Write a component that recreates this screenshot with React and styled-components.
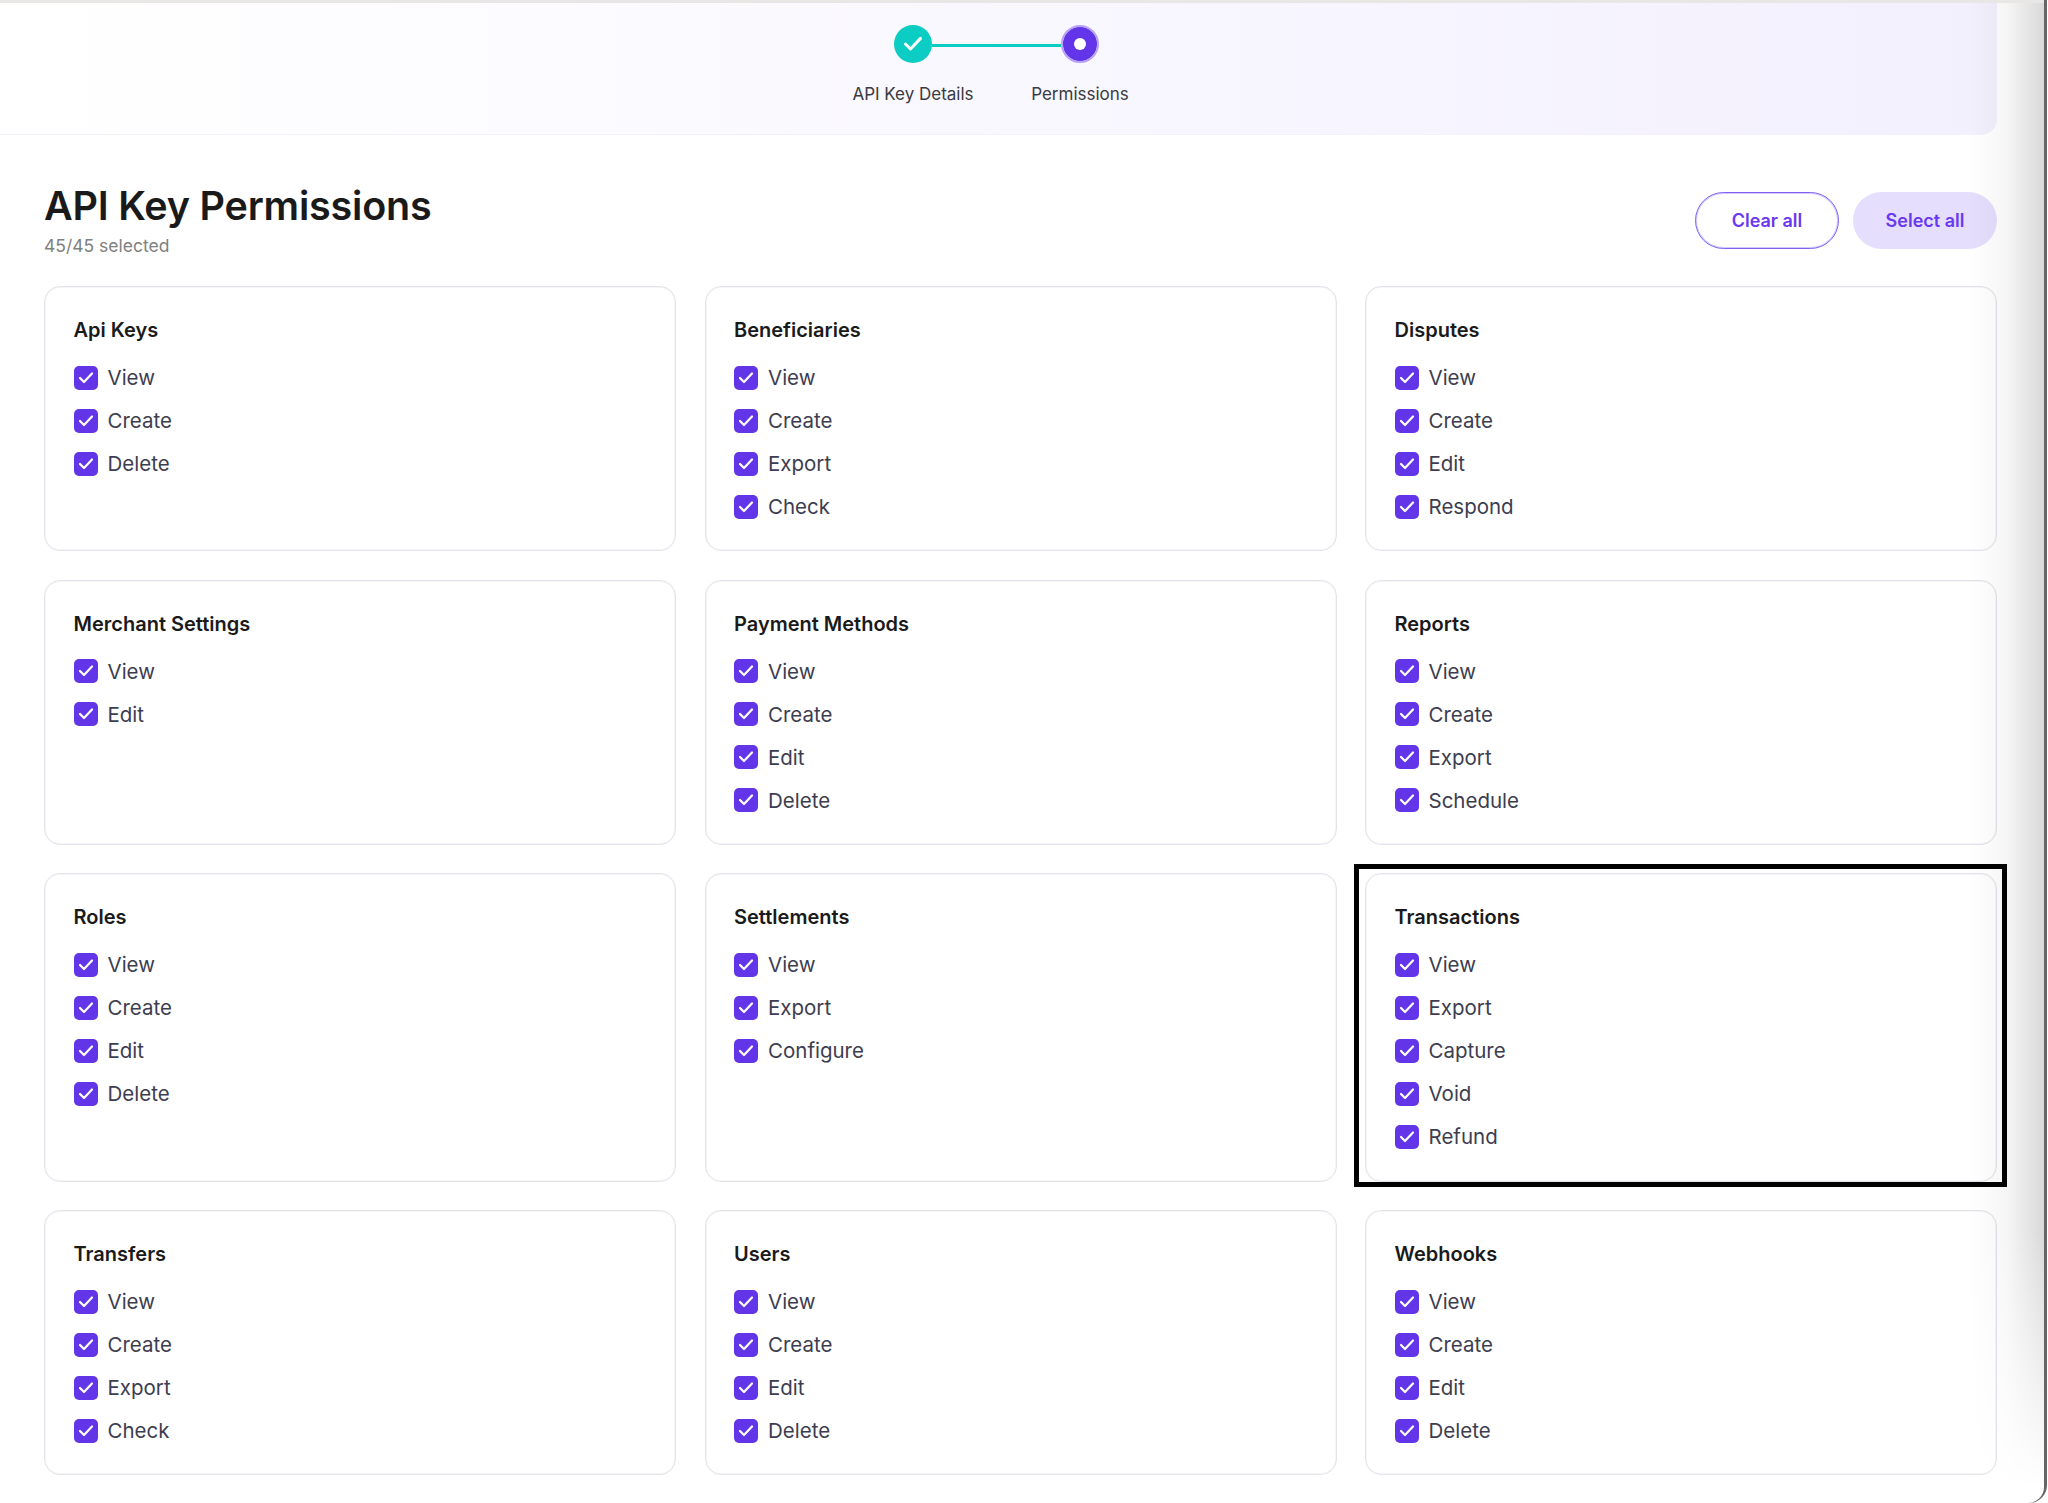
import React from "react";
import styled, { createGlobalStyle } from "styled-components";

const GlobalStyle = createGlobalStyle`
  html, body {
    margin: 0;
    padding: 0;
    background: #fff;
  }
  body {
    font-family: Inter, "Open Sans", "Liberation Sans", sans-serif;
  }
`;

const Frame = styled.div`
  width: 2048px;
  height: 1503px;
  overflow: hidden;
  background: #fff;
  padding-right: 1px;
  box-sizing: border-box;
`;

const Edge = styled.div`
  height: 100%;
  background: #666;
  padding-right: 3px;
  border-bottom-right-radius: 18px;
  box-sizing: border-box;
`;

const Page = styled.div`
  position: relative;
  height: 100%;
  overflow: hidden;
  background: #fff;
  border-top: 3px solid #e9e7e6;
  border-bottom-right-radius: 16px;
  box-sizing: border-box;

  &::after {
    content: "";
    position: absolute;
    top: 0;
    bottom: 0;
    right: 0;
    width: 75px;
    pointer-events: none;
    background: linear-gradient(to right, rgba(0, 0, 0, 0), rgba(0, 0, 0, 0.035) 50%, rgba(0, 0, 0, 0.15));
    mask-image: linear-gradient(to bottom, #000 82%, transparent 99%);
  }
`;

const Banner = styled.header`
  display: flex;
  flex-direction: column;
  align-items: center;
  width: 1997px;
  height: 132px;
  padding: 22px 4px 0 0;
  box-sizing: border-box;
  background: linear-gradient(to right, #ffffff, #f3f0fe);
  border-bottom: 1px solid #f3f1fb;
  border-bottom-right-radius: 16px;
`;

const Track = styled.div`
  display: flex;
  align-items: center;
  width: 205px;
`;

const Circle = styled.span`
  display: flex;
  flex: none;
  align-items: center;
  justify-content: center;
  width: 38px;
  height: 38px;
  border-radius: 50%;
  box-sizing: border-box;
  background: ${(p) => (p.$active ? "#6236e8" : "#0bcdc3")};
  ${(p) => p.$active && "border: 2px solid #b7a3f3; background-clip: padding-box; box-shadow: inset 0 0 0 1px #6236e8;"}
`;

const Dot = styled.span`
  width: 12px;
  height: 12px;
  border-radius: 50%;
  background: #fff;
`;

const Connector = styled.span`
  flex: 1;
  height: 3px;
  margin-top: 2px;
  background: #0bcdc3;
`;

const StepLabels = styled.div`
  display: grid;
  grid-template-columns: 167px 167px;
  margin-top: 19px;
`;

const StepLabel = styled.span`
  font-size: 17px;
  line-height: 24px;
  text-align: center;
  color: #3a3a42;
  white-space: nowrap;
`;

const Main = styled.main`
  width: 1953px;
  padding: 47px 0 0 44px;
`;

const TopRow = styled.div`
  display: flex;
  align-items: center;
  justify-content: space-between;
  height: 77px;
  margin-bottom: 27px;
`;

const Heading = styled.div`
  display: flex;
  flex-direction: column;
  margin-top: -2px;
`;

const Title = styled.h1`
  margin: 0;
  font-size: 39.5px;
  line-height: 49px;
  font-weight: 600;
  color: #1a1a1a;
  letter-spacing: -0.2px;
`;

const Counter = styled.span`
  margin-top: 3px;
  font-size: 17.5px;
  line-height: 24px;
  color: #808080;
`;

const Actions = styled.div`
  display: flex;
  gap: 14px;
`;

const PillButton = styled.button`
  width: 144px;
  height: 57px;
  padding: 0;
  border-radius: 29px;
  border: ${(p) => (p.$filled ? "0" : "1px solid #7f60f0")};
  box-shadow: ${(p) => (p.$filled ? "none" : "inset 0 0 0 1px rgba(127, 96, 240, 0.35)")};
  background: ${(p) => (p.$filled ? "#e5dffd" : "#fff")};
  color: #6938ef;
  font-family: inherit;
  font-size: 18px;
  font-weight: 600;
  cursor: pointer;
`;

const Grid = styled.div`
  display: grid;
  grid-template-columns: repeat(3, 632px);
  column-gap: 28.5px;
  row-gap: 28.3px;
`;

const Card = styled.section`
  position: relative;
  padding: 30px 28.5px 31.8px;
  border: 1px solid #e3e3e9;
  box-shadow: inset 0 0 0 1px #f6f6f8;
  border-radius: 16px;
  background: #fff;
`;

// black frame drawn over the highlighted card
const Highlight = styled.span`
  position: absolute;
  top: -10px;
  left: -12px;
  right: -11px;
  bottom: -6px;
  border: 5px solid #000;
  pointer-events: none;
`;

const CardTitle = styled.h2`
  margin: 0 0 22.6px;
  font-size: 20px;
  line-height: 26px;
  font-weight: 600;
  color: #1a1a1a;
`;

const List = styled.ul`
  display: flex;
  flex-direction: column;
  gap: 19px;
  margin: 0;
  padding: 0;
  list-style: none;
`;

const Item = styled.li`
  display: flex;
  align-items: center;
  gap: 10px;
  height: 24px;
  font-size: 20.5px;
  color: #3d3d50;
`;

const Box = styled.span`
  display: flex;
  flex: none;
  align-items: center;
  justify-content: center;
  width: 24px;
  height: 24px;
  border-radius: 5px;
  background: #6236e8;
`;

const Tick = ({ size, width }) => (
  <svg width={size} height={size} viewBox="0 0 16 16" fill="none" aria-hidden="true">
    <path d="M2 8 L6 12 L14 3.5" stroke="#fff" strokeWidth={width} strokeLinecap="round" strokeLinejoin="round" />
  </svg>
);

const groups = [
  ["Api Keys", ["View", "Create", "Delete"]],
  ["Beneficiaries", ["View", "Create", "Export", "Check"]],
  ["Disputes", ["View", "Create", "Edit", "Respond"]],
  ["Merchant Settings", ["View", "Edit"]],
  ["Payment Methods", ["View", "Create", "Edit", "Delete"]],
  ["Reports", ["View", "Create", "Export", "Schedule"]],
  ["Roles", ["View", "Create", "Edit", "Delete"]],
  ["Settlements", ["View", "Export", "Configure"]],
  ["Transactions", ["View", "Export", "Capture", "Void", "Refund"]],
  ["Transfers", ["View", "Create", "Export", "Check"]],
  ["Users", ["View", "Create", "Edit", "Delete"]],
  ["Webhooks", ["View", "Create", "Edit", "Delete"]],
];

const App = () => (
  <Frame>
    <GlobalStyle />
    <Edge>
      <Page>
        <Banner>
          <Track>
            <Circle>
              <Tick size={20} width={2.4} />
            </Circle>
            <Connector />
            <Circle $active>
              <Dot />
            </Circle>
          </Track>
          <StepLabels>
            <StepLabel>API Key Details</StepLabel>
            <StepLabel>Permissions</StepLabel>
          </StepLabels>
        </Banner>
        <Main>
          <TopRow>
            <Heading>
              <Title>API Key Permissions</Title>
              <Counter>45/45 selected</Counter>
            </Heading>
            <Actions>
              <PillButton>Clear all</PillButton>
              <PillButton $filled>Select all</PillButton>
            </Actions>
          </TopRow>
          <Grid>
            {groups.map(([name, perms]) => (
              <Card key={name}>
                <CardTitle>{name}</CardTitle>
                <List>
                  {perms.map((perm) => (
                    <Item key={perm}>
                      <Box>
                        <Tick size={16} width={2.2} />
                      </Box>
                      {perm}
                    </Item>
                  ))}
                </List>
                {name === "Transactions" && <Highlight />}
              </Card>
            ))}
          </Grid>
        </Main>
      </Page>
    </Edge>
  </Frame>
);

export default App;
